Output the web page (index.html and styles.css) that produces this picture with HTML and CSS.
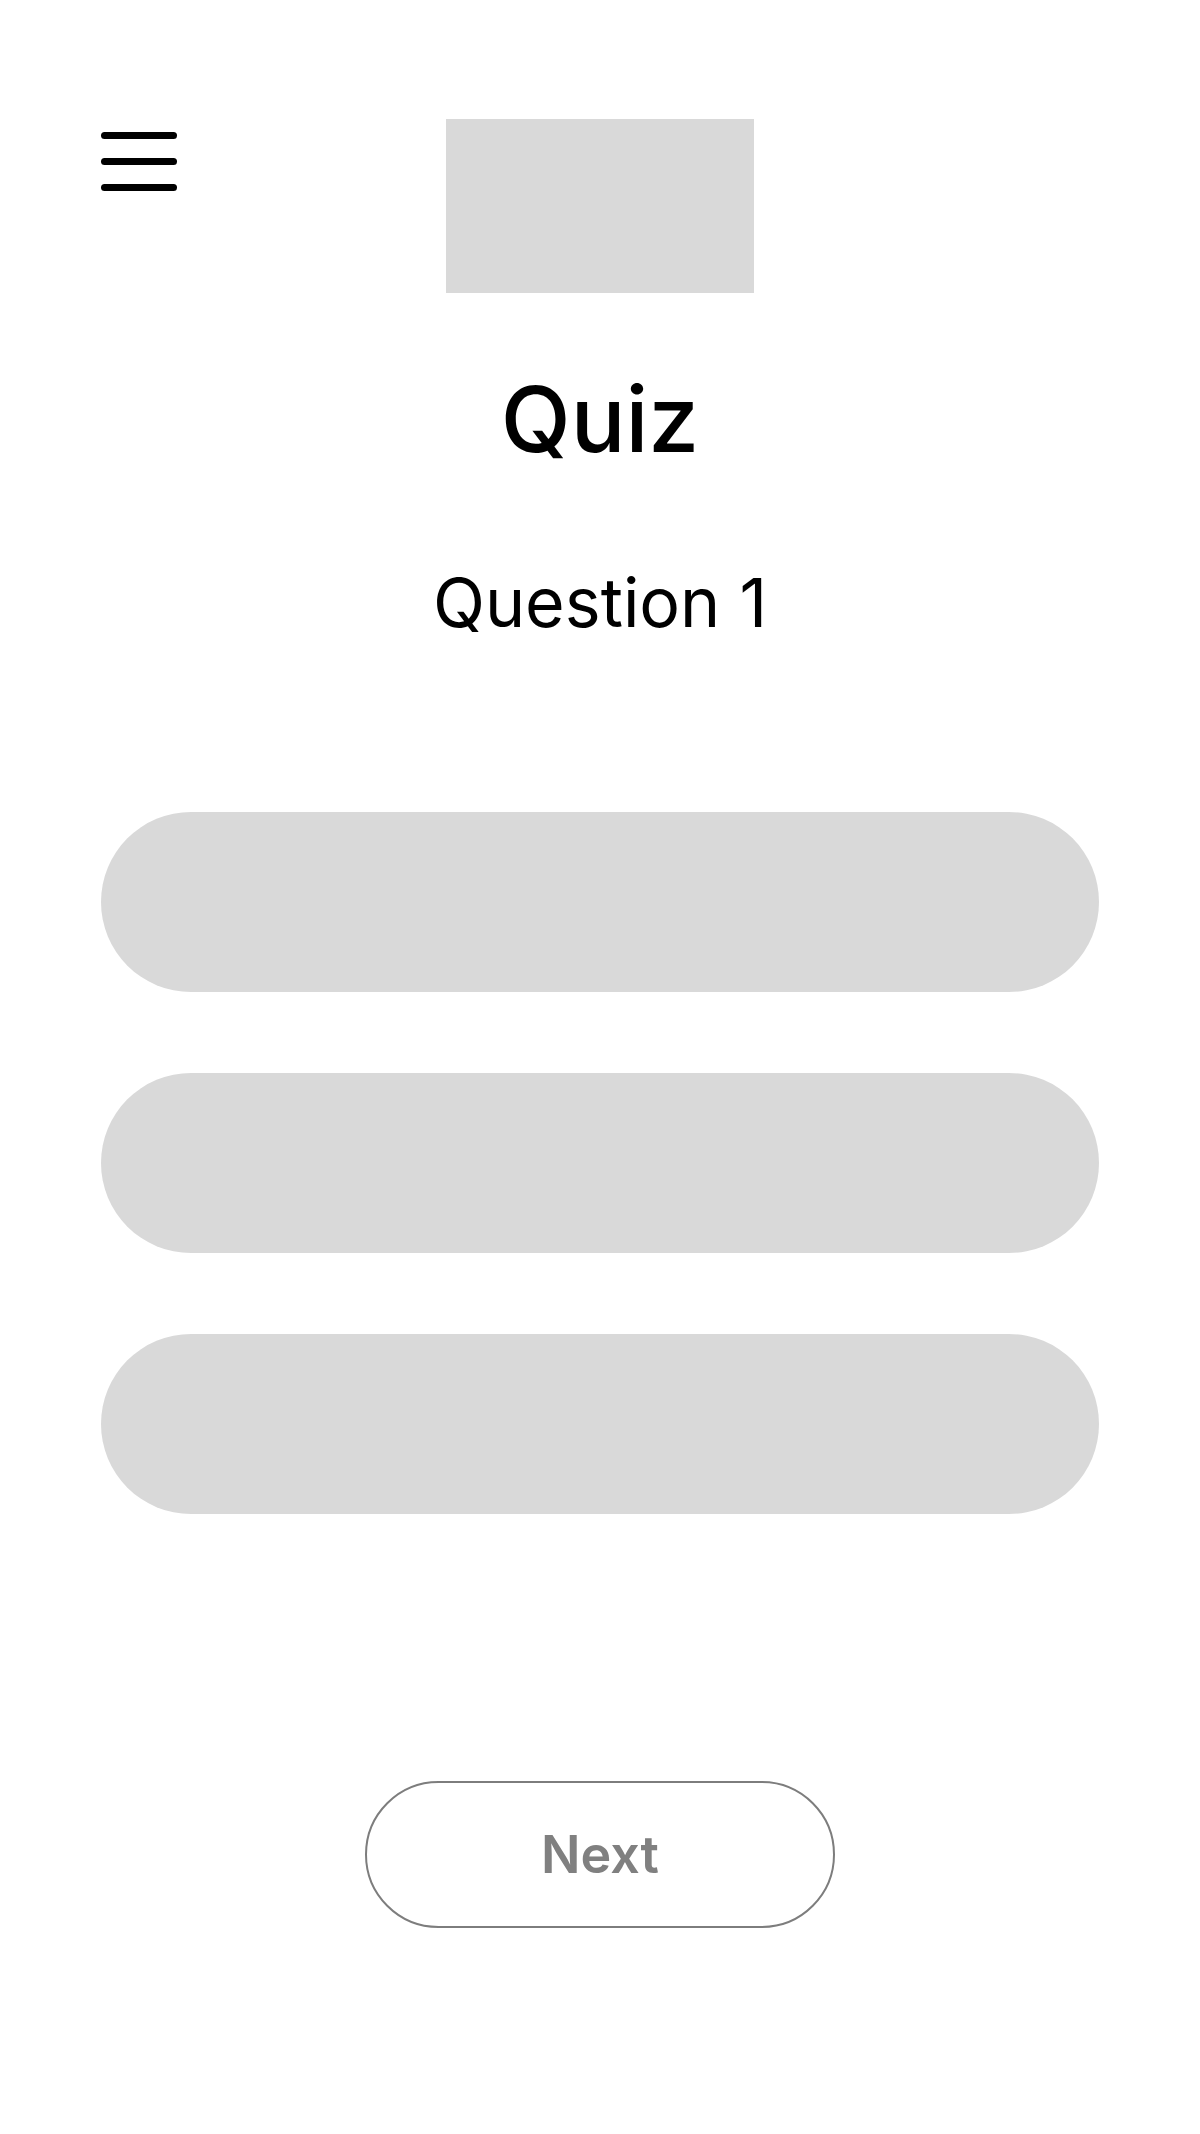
FILE: index.html
```html
<!DOCTYPE html>
<html lang="en">
<head>
<meta charset="utf-8">
<title>Quiz</title>
<link rel="stylesheet" href="styles.css">
</head>
<body>
<main class="page">
  <header class="header">
    <button class="menu" aria-label="Menu">
      <span class="bar"></span>
      <span class="bar"></span>
      <span class="bar"></span>
    </button>
    <div class="logo"></div>
    <div class="spacer"></div>
  </header>
  <h1 class="title">Quiz</h1>
  <h2 class="question">Question 1</h2>
  <div class="options">
    <div class="option"></div>
    <div class="option"></div>
    <div class="option"></div>
  </div>
  <div class="actions">
    <button class="next">Next</button>
  </div>
</main>
</body>
</html>
```

FILE: styles.css
```css
html, body {
  margin: 0;
  padding: 0;
  background: #ffffff;
}

body {
  font-family: Inter, "Noto Sans", "Liberation Sans", sans-serif;
  color: #000;
}

.page {
  display: flex;
  flex-direction: column;
  padding: 119px 101px 0 101px;
  min-height: 2134px;
  box-sizing: border-box;
}

.header {
  display: grid;
  grid-template-columns: 1fr 308px 1fr;
  align-items: start;
}

.menu {
  display: flex;
  flex-direction: column;
  gap: 19px;
  width: 76px;
  padding: 0;
  margin: 13px 0 0 0;
  border: 0;
  background: none;
}

.bar {
  display: block;
  width: 76px;
  height: 7px;
  border-radius: 3.5px;
  background: #000;
}

.logo {
  width: 308px;
  height: 174px;
  background: #d9d9d9;
}

.title {
  margin: 81px 0 0 0;
  font-size: 91px;
  line-height: 91px;
  font-weight: 500;
  text-align: center;
}

.question {
  margin: 103px 0 0 0;
  font-size: 68px;
  line-height: 68px;
  font-weight: 400;
  text-align: center;
}

.options {
  display: flex;
  flex-direction: column;
  gap: 81px;
  margin-top: 176px;
}

.option {
  height: 180px;
  border-radius: 90px;
  background: #d9d9d9;
}

.actions {
  display: flex;
  justify-content: center;
  margin-top: 267px;
}

.next {
  width: 470px;
  height: 147px;
  border: 2.5px solid #7d7d7d;
  border-radius: 74px;
  background: #fff;
  color: #808080;
  font-family: Inter, "Noto Sans", "Liberation Sans", sans-serif;
  font-size: 52px;
  font-weight: 600;
  padding: 0;
}
```
